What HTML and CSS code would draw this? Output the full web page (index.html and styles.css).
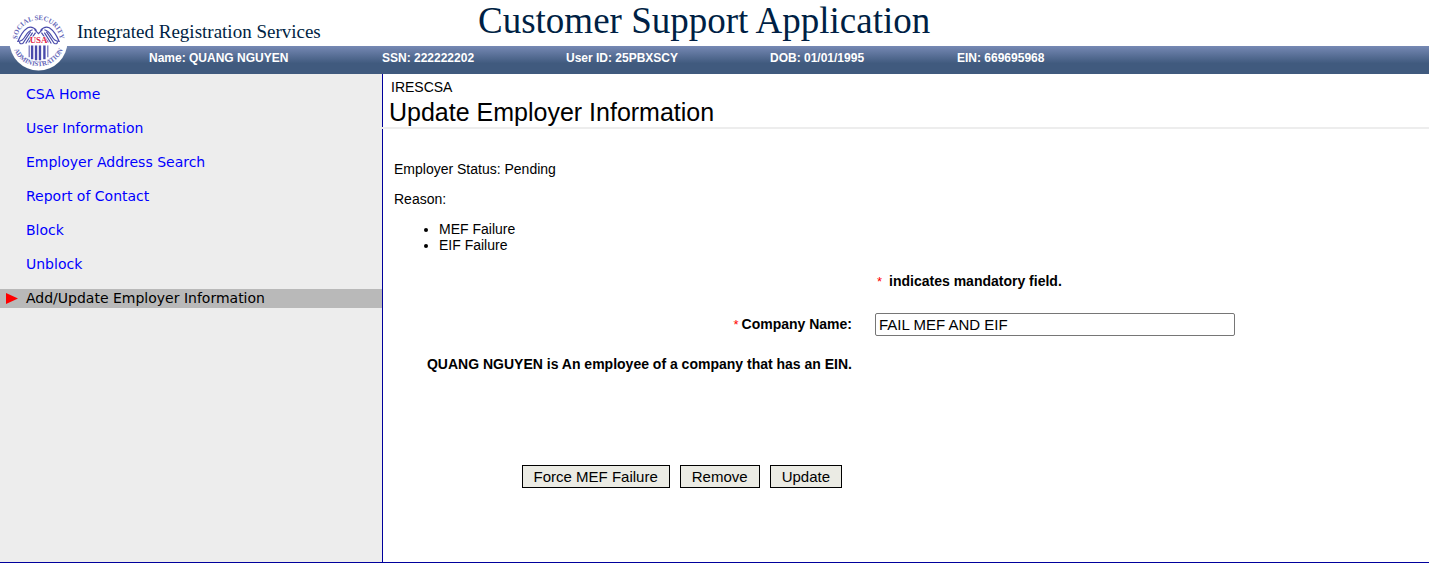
FILE: index.html
```html
<!DOCTYPE html>
<html lang="en">
<head>
<meta charset="utf-8">
<title>Customer Support Application</title>
<link rel="stylesheet" href="styles.css">
</head>
<body>
<header class="banner">
  <svg class="seal" viewBox="0 0 60 60" role="img" aria-label="Social Security Administration">
    <defs>
      <path id="arc-top" d="M8.800 36 A22 22 0 1 1 51.200 36"/>
      <path id="arc-bottom" d="M3 28 A27 27 0 1 0 57 28"/>
    </defs>
    <circle cx="30" cy="30" r="29.500" fill="#fff"/>
    <g class="seal-ring">
      <text><textPath href="#arc-top" startOffset="50%" text-anchor="middle">SOCIAL SECURITY</textPath></text>
      <text><textPath href="#arc-bottom" startOffset="50%" text-anchor="middle">ADMINISTRATION</textPath></text>
    </g>
    <g fill="none" stroke="#4a4bab" stroke-width="1.200">
      <path d="M28 19 Q24 14 19 16 Q13 20 9 30 Q14 30 17 24 Q20 19 24 18"/>
      <path d="M11 30 Q10 33 14 32 L22 20 M17 32 L24 21 M20 31 L27 21"/>
      <path d="M32 19 Q36 14 41 16 Q47 20 51 30 Q46 30 43 24 Q40 19 36 18"/>
      <path d="M49 30 Q50 33 46 32 L38 20 M43 32 L36 21 M40 31 L33 21"/>
      <path d="M26 18 L30 22 L34 18"/>
      <path d="M20.500 34 V46 M39.500 34 V46" stroke-width="1"/>
      <path d="M23.500 34 V48 M27.500 34 V49 M31.500 34 V49 M36 34 V48" stroke-width="2.400"/>
    </g>
    <text class="seal-usa" x="30" y="32" text-anchor="middle">USA</text>
  </svg>
  <div class="titles">
    <div class="service">Integrated Registration Services</div>
    <div class="app-title">Customer Support Application</div>
  </div>
  <div class="userbar">
    <span>Name: QUANG NGUYEN</span>
    <span>SSN: 222222202</span>
    <span>User ID: 25PBXSCY</span>
    <span>DOB: 01/01/1995</span>
    <span>EIN: 669695968</span>
  </div>
</header>
<div class="layout">
  <nav class="sidebar">
    <a href="#">CSA Home</a>
    <a href="#">User Information</a>
    <a href="#">Employer Address Search</a>
    <a href="#">Report of Contact</a>
    <a href="#">Block</a>
    <a href="#">Unblock</a>
    <div class="current" aria-current="page">
      <svg class="marker" viewBox="0 0 12 11" aria-hidden="true"><path d="M0 0 L12 5.500 L0 11 Z" fill="#f00"/></svg>
      <span>Add/Update Employer Information</span>
    </div>
  </nav>
  <main class="content">
    <div class="heading">
      <div class="crumb">IRESCSA</div>
      <h1>Update Employer Information</h1>
    </div>
    <form class="body">
      <div class="status">
        <p>Employer Status: Pending</p>
        <p>Reason:</p>
        <ul>
          <li>MEF Failure</li>
          <li>EIF Failure</li>
        </ul>
      </div>
      <div class="fields">
        <div class="note"><span class="star">*</span>indicates mandatory field.</div>
        <label class="name-label" for="company"><span class="star">*</span>Company Name:</label>
        <input id="company" type="text" value="FAIL MEF AND EIF">
        <div class="employee">QUANG NGUYEN is An employee of a company that has an EIN.</div>
        <div class="actions">
          <button type="button">Force MEF Failure</button>
          <button type="button">Remove</button>
          <button type="button">Update</button>
        </div>
      </div>
    </form>
  </main>
</div>
</body>
</html>
```
FILE: styles.css
```css
* { box-sizing: border-box; }
body {
  margin: 0;
  background: #fff;
  color: #000;
  font: 14px/16px "Liberation Sans", Arial, sans-serif;
}
.banner { position: relative; }
.seal {
  position: absolute;
  left: 9px;
  top: 12px;
  width: 59px;
  height: 59px;
}
.seal-ring { font: bold 7px "Liberation Serif", serif; fill: #6667b8; }
.seal-usa { font: bold 9px "Liberation Serif", serif; fill: #e32448; stroke: #fff; stroke-width: 1px; paint-order: stroke; }
.titles {
  display: flex;
  height: 46px;
  padding-left: 77px;
  color: #001f44;
  font-family: Georgia, "Liberation Serif", serif;
  white-space: nowrap;
}
.service { flex: 0 0 401px; padding-top: 20px; font-size: 19px; line-height: 24px; }
.app-title { font-size: 37px; line-height: 42px; }
.userbar {
  display: grid;
  grid-template-columns: 233fr 184fr 204fr 187fr 472fr;
  height: 28px;
  padding-left: 149px;
  background: linear-gradient(#7689b4 0%, #405a7e 62%);
  color: #fff;
  font-size: 12px;
  font-weight: bold;
  line-height: 24px;
  white-space: nowrap;
}
.layout {
  display: grid;
  grid-template-columns: 382fr 1047fr;
  border-bottom: 1px solid #00009c;
}
.sidebar {
  display: flex;
  flex-direction: column;
  gap: 15px;
  padding-top: 11px;
  background: #ededed;
  font: 14px/19px Verdana, "DejaVu Sans", sans-serif;
}
.sidebar a { padding-left: 26px; color: #00f; text-decoration: none; }
.current { display: flex; align-items: center; gap: 8px; padding-left: 6px; background: #b9b9b9; }
.marker { width: 12px; height: 11px; }
.content {
  display: grid;
  grid-template-rows: auto 1fr;
  gap: 2px;
  background: #ededed;
}
.heading,
.body {
  border-left: 1px solid #00009c;
  background: #fff;
}
.heading { padding: 5px 0 0 6px; }
.crumb { padding-left: 2px; }
h1 { margin: 0; padding-top: 3px; font-size: 25px; font-weight: normal; line-height: 29px; }
.body { padding: 32px 0 74px; }
.status { padding-left: 11px; }
.status p { margin: 0 0 14px; }
.status ul { margin: 0; padding-left: 45px; }
.fields {
  display: grid;
  grid-template-columns: 469fr 554fr;
  column-gap: 23px;
  align-items: center;
  margin-top: 20px;
  font-weight: bold;
}
.note { grid-column: 2; padding-left: 2px; }
.note .star { margin-right: 7px; }
.star { color: #f00; font-size: 13px; font-weight: normal; }
.name-label { padding-top: 3px; text-align: right; }
.name-label .star { margin-right: 3px; }
input {
  width: 65%;
  height: 23px;
  margin: 23px 0 20px;
  padding: 1px 3px;
  border: 1px solid #767676;
  border-radius: 2px;
  background: #fff;
  color: #000;
  font: 15px "Liberation Sans", Arial, sans-serif;
}
.employee { text-align: right; }
.actions {
  grid-column: 1;
  display: flex;
  justify-content: flex-end;
  gap: 10px;
  margin-top: 93px;
  padding-right: 10px;
}
button {
  height: 23px;
  padding: 0 11px;
  border: 1px solid #000;
  background: #ebebe4;
  color: #000;
  font: 15px "Liberation Sans", Arial, sans-serif;
}
```
